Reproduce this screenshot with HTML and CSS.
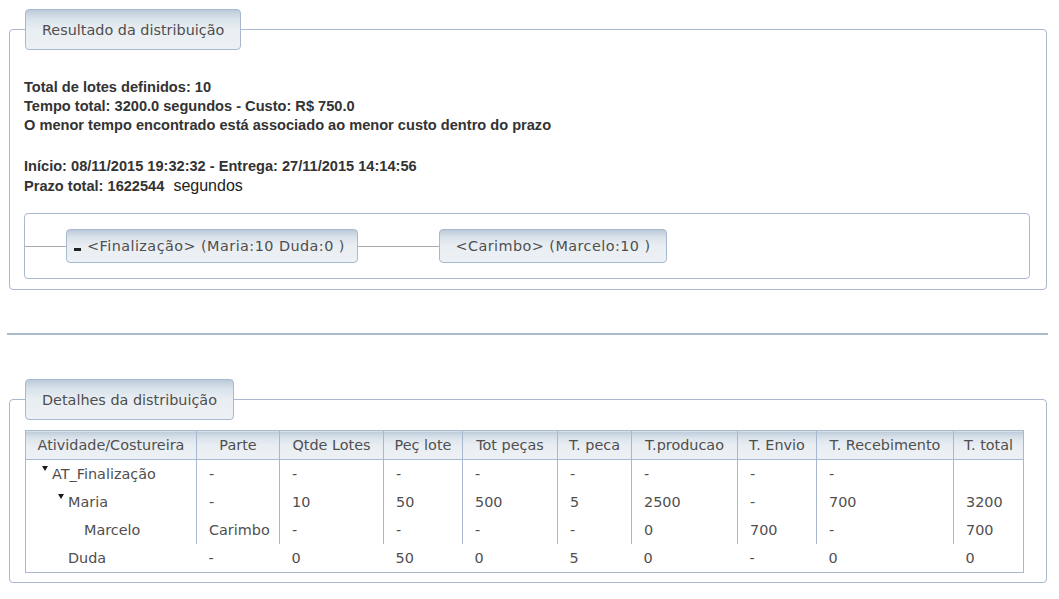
FILE: index.html
```html
<!DOCTYPE html>
<html lang="pt">
<head>
<meta charset="utf-8">
<title>Resultado da distribuição</title>
<link rel="stylesheet" href="styles.css">
</head>
<body>
<fieldset class="panel panel-result">
  <legend class="panel-legend">Resultado da distribuição</legend>
  <div class="summary">
    <div class="summary-block">
      <div>Total de lotes definidos: 10</div>
      <div>Tempo total: 3200.0 segundos - Custo: R$ 750.0</div>
      <div>O menor tempo encontrado está associado ao menor custo dentro do prazo</div>
    </div>
    <div class="summary-block second">
      <div>Início: 08/11/2015 19:32:32 - Entrega: 27/11/2015 14:14:56</div>
      <div>Prazo total: 1622544 <span class="unit">segundos</span></div>
    </div>
  </div>
  <div class="orgchart">
    <span class="connector lead"></span>
    <div class="node node-first"><span class="node-toggle"></span>&lt;Finalização&gt; (Maria:10 Duda:0 )</div>
    <span class="connector mid"></span>
    <div class="node node-second">&lt;Carimbo&gt; (Marcelo:10 )</div>
  </div>
</fieldset>

<hr class="divider">

<fieldset class="panel panel-details">
  <legend class="panel-legend">Detalhes da distribuição</legend>
  <table class="tree-table">
    <colgroup>
      <col class="w-atividade">
      <col class="w-parte">
      <col class="w-qtde">
      <col class="w-peclote">
      <col class="w-totpecas">
      <col class="w-tpeca">
      <col class="w-tprod">
      <col class="w-tenvio">
      <col class="w-treceb">
      <col class="w-ttotal">
    </colgroup>
    <thead>
      <tr>
        <th>Atividade/Costureira</th>
        <th>Parte</th>
        <th>Qtde Lotes</th>
        <th>Peç lote</th>
        <th>Tot peças</th>
        <th>T. peca</th>
        <th>T.producao</th>
        <th>T. Envio</th>
        <th>T. Recebimento</th>
        <th>T. total</th>
      </tr>
    </thead>
    <tbody>
      <tr>
        <td class="name"><span class="toggler"></span>AT_Finalização</td>
        <td>-</td><td>-</td><td>-</td><td>-</td><td>-</td><td>-</td><td>-</td><td>-</td><td></td>
      </tr>
      <tr>
        <td class="name"><span class="indent"></span><span class="toggler"></span>Maria</td>
        <td>-</td><td>10</td><td>50</td><td>500</td><td>5</td><td>2500</td><td>-</td><td>700</td><td>3200</td>
      </tr>
      <tr>
        <td class="name"><span class="indent"></span><span class="indent"></span><span class="spacer"></span>Marcelo</td>
        <td>Carimbo</td><td>-</td><td>-</td><td>-</td><td>-</td><td>0</td><td>700</td><td>-</td><td>700</td>
      </tr>
      <tr class="row-plain">
        <td class="name"><span class="indent"></span><span class="spacer"></span>Duda</td>
        <td>-</td><td>0</td><td>50</td><td>0</td><td>5</td><td>0</td><td>-</td><td>0</td><td>0</td>
      </tr>
    </tbody>
  </table>
</fieldset>
</body>
</html>
```

FILE: styles.css
```css
html, body {
  margin: 0;
  padding: 0;
  background: #ffffff;
}

body {
  font-family: "DejaVu Sans", Verdana, sans-serif;
  color: #4f4f4f;
}

.panel {
  margin: 9px 12px 0 9px;
  padding: 0 16px 10px 14px;
  border: 1px solid #a8b8cf;
  border-radius: 4px;
  min-width: 0;
}

.panel-legend {
  margin-left: 1px;
  padding: 0 16px;
  height: 39px;
  line-height: 40px;
  font-size: 14.4px;
  color: #4f4f4f;
  border: 1px solid #a8b8cf;
  border-radius: 4px;
  background: linear-gradient(#bccad9 0%, #d9e2eb 22%, #e9eef3 50%, #edf1f5 100%);
  box-sizing: content-box;
}

.summary {
  margin-top: 28px;
  font-family: "Liberation Sans", Arial, sans-serif;
  font-weight: bold;
  font-size: 14.6px;
  line-height: 19px;
  color: #333333;
}

.summary-block.second {
  margin-top: 22px;
}

.summary .unit {
  font-weight: normal;
  font-size: 16px;
  color: #222222;
  margin-left: 5px;
}

.orgchart {
  margin-top: 17px;
  display: flex;
  align-items: center;
  padding: 15px 0;
  border: 1px solid #a8b8cf;
  border-radius: 4px;
}

.connector {
  display: block;
  height: 1px;
  background: #aaaaaa;
}

.connector.lead {
  width: 41px;
}

.connector.mid {
  width: 81px;
}

.node {
  box-sizing: border-box;
  height: 34px;
  display: flex;
  align-items: center;
  font-size: 14.4px;
  letter-spacing: 0.45px;
  color: #4f4f4f;
  white-space: nowrap;
  border: 1px solid #a8b8cf;
  border-radius: 4px;
  background: linear-gradient(#bccad9 0%, #d9e2eb 22%, #e9eef3 50%, #edf1f5 100%);
}

.node-first {
  width: 292px;
  padding-left: 7px;
}

.node-second {
  width: 228px;
  justify-content: center;
}

.node-toggle {
  display: inline-block;
  width: 7px;
  height: 3px;
  background: #222222;
  margin: 7px 6px 0 0;
}

.divider {
  margin: 43px 11px 0 7px;
  height: 2px;
  border: 0;
  background: #a9bacc;
}

.panel-details {
  margin-top: 44px;
  padding-bottom: 9px;
}

.tree-table {
  margin-top: 10px;
  margin-left: 1px;
  border-collapse: collapse;
  table-layout: fixed;
  width: 998px;
  border: 1px solid #a8b8cf;
  font-size: 14.4px;
  color: #4f4f4f;
}

.w-atividade { width: 171px; }
.w-parte { width: 83px; }
.w-qtde { width: 104px; }
.w-peclote { width: 79px; }
.w-totpecas { width: 95px; }
.w-tpeca { width: 74px; }
.w-tprod { width: 106px; }
.w-tenvio { width: 79px; }
.w-treceb { width: 137px; }
.w-ttotal { width: 70px; }

.tree-table th {
  height: 28px;
  padding: 0;
  font-weight: normal;
  text-align: center;
  white-space: nowrap;
  border: 1px solid #a8b8cf;
  background: linear-gradient(#bccad9 0%, #d9e2eb 22%, #e9eef3 50%, #edf1f5 100%);
}

.tree-table td {
  height: 28px;
  padding: 0 0 0 12px;
  white-space: nowrap;
  border-left: 1px solid #a8b8cf;
  border-right: 1px solid #a8b8cf;
}

.tree-table td.name {
  padding-left: 16px;
}

.tree-table .row-plain td {
  border-left: none;
  border-right: none;
}

.indent {
  display: inline-block;
  width: 16px;
}

.spacer {
  display: inline-block;
  width: 10px;
}

.toggler {
  display: inline-block;
  width: 0;
  height: 0;
  border-left: 3px solid transparent;
  border-right: 3px solid transparent;
  border-top: 5px solid #1a1a1a;
  margin-right: 4px;
  vertical-align: 8px;
}
```
